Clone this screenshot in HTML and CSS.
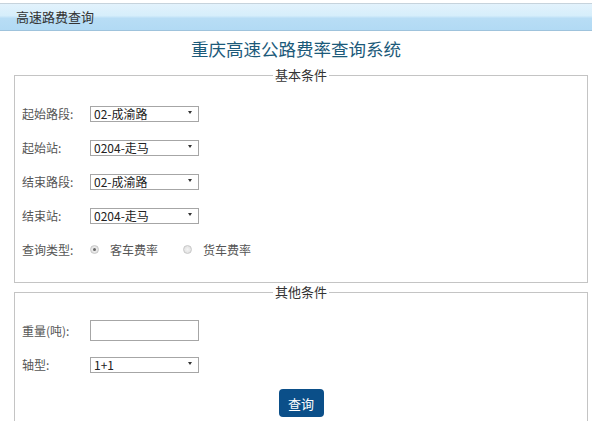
FILE: index.html
```html
<!DOCTYPE html>
<html lang="zh-CN">
<head>
<meta charset="utf-8">
<title>高速路费查询</title>
<link rel="stylesheet" href="styles.css">
</head>
<body>
<div class="topbar">高速路费查询</div>
<h1 class="title">重庆高速公路费率查询系统</h1>
<fieldset class="group group-basic">
  <legend>基本条件</legend>
  <div class="row">
    <span class="label">起始路段:</span>
    <span class="sel"><select><option>02-成渝路</option></select></span>
  </div>
  <div class="row">
    <span class="label">起始站:</span>
    <span class="sel"><select><option>0204-走马</option></select></span>
  </div>
  <div class="row">
    <span class="label">结束路段:</span>
    <span class="sel"><select><option>02-成渝路</option></select></span>
  </div>
  <div class="row">
    <span class="label">结束站:</span>
    <span class="sel"><select><option>0204-走马</option></select></span>
  </div>
  <div class="row">
    <span class="label">查询类型:</span>
    <label class="radio"><span class="dot checked"></span>客车费率</label>
    <label class="radio"><span class="dot"></span>货车费率</label>
  </div>
</fieldset>
<fieldset class="group group-other">
  <legend>其他条件</legend>
  <div class="row">
    <span class="label">重量(吨):</span>
    <input class="text" type="text">
  </div>
  <div class="row">
    <span class="label">轴型:</span>
    <span class="sel"><select><option>1+1</option></select></span>
  </div>
  <div class="actions">
    <button class="btn" type="button">查询</button>
  </div>
</fieldset>
</body>
</html>
```
FILE: styles.css
```css
html, body {
  margin: 0;
  padding: 0;
  background: #ffffff;
  font-family: "Noto Sans CJK SC", "Noto Sans", sans-serif;
  color: #555555;
  overflow: hidden;
}
.topbar {
  margin-top: 3px;
  height: 26px;
  line-height: 26px;
  padding-left: 16px;
  font-size: 13px;
  color: #333333;
  border-top: 1px solid #c6d3dc;
  border-bottom: 1px solid #9fc3dc;
  background: linear-gradient(#e2f2fc 0%, #d6eefb 45%, #b8ddf5 55%, #b2daf4 100%);
}
.title {
  margin: 6px 0 0;
  height: 24px;
  line-height: 24px;
  text-align: center;
  font-size: 17.5px;
  font-weight: normal;
  color: #1c5a7a;
}
.group {
  margin: 0 0 0 14px;
  box-sizing: border-box;
  width: 574px;
  border: 1px solid #c4c4c4;
  padding: 12px 7px 16px;
}
.group-basic {
  margin-top: 5px;
}
.group legend {
  margin: 0 auto;
  padding: 0 2px;
  font-size: 13px;
  line-height: 18px;
  height: 18px;
  color: #333333;
}
.row {
  display: flex;
  align-items: center;
  height: 34px;
  font-size: 12px;
}
.label {
  width: 68px;
  flex: none;
}
.sel {
  position: relative;
  display: inline-block;
  width: 109px;
  height: 16px;
}
.sel select {
  appearance: none;
  -webkit-appearance: none;
  width: 109px;
  height: 16px;
  margin: 0;
  padding: 0 0 0 3px;
  border: 1px solid #a6a6a6;
  border-radius: 0;
  background: #ffffff;
  font-family: "Noto Sans CJK SC", "Noto Sans", sans-serif;
  font-size: 12px;
  line-height: 14px;
  color: #222222;
  box-sizing: border-box;
}
.sel::after {
  content: "";
  position: absolute;
  right: 7px;
  top: 6px;
  border-left: 2px solid transparent;
  border-right: 2px solid transparent;
  border-top: 3px solid #333333;
  pointer-events: none;
}
.text {
  width: 109px;
  height: 21px;
  margin: 1px 0 0;
  padding: 0;
  border: 1px solid #a6a6a6;
  box-sizing: border-box;
}
.radio {
  display: flex;
  align-items: center;
  margin-right: 25px;
  color: #555555;
}
.dot {
  width: 9px;
  height: 9px;
  border-radius: 50%;
  box-sizing: border-box;
  border: 1px solid #c8c8c8;
  background: radial-gradient(#f4f4f4, #dcdcdc);
  margin-right: 11px;
  position: relative;
}
.dot.checked::after {
  content: "";
  position: absolute;
  left: 2px;
  top: 2px;
  width: 3px;
  height: 3px;
  border-radius: 50%;
  background: #666666;
}
.actions {
  display: flex;
  justify-content: center;
  padding-top: 8px;
}
.btn {
  width: 45px;
  height: 28px;
  border: none;
  border-radius: 4px;
  background: #0b4f89;
  color: #ffffff;
  font-family: "Noto Sans CJK SC", "Noto Sans", sans-serif;
  font-size: 13px;
  padding: 0;
}
```
